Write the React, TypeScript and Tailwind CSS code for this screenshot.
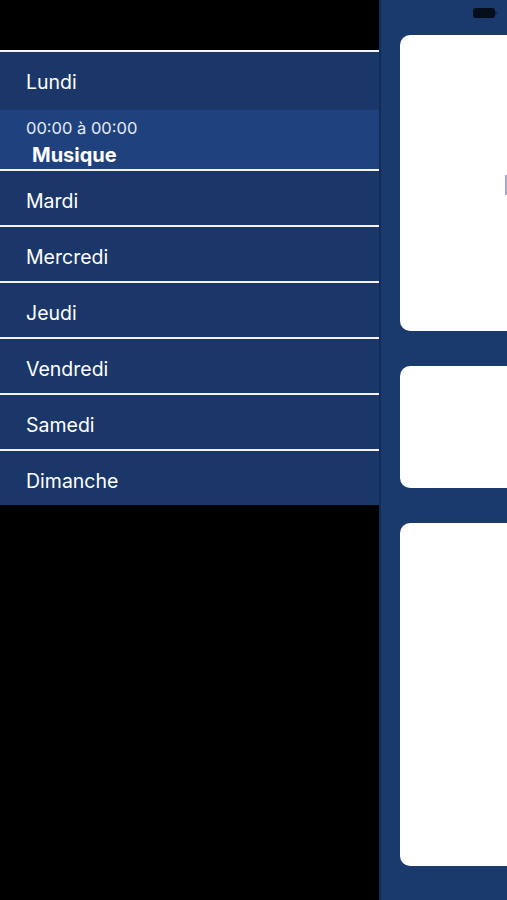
import React from 'react';

const days = ['Mardi', 'Mercredi', 'Jeudi', 'Vendredi', 'Samedi', 'Dimanche'];

const Divider = () => <div className="h-[2px] bg-[#f2f4f8]" />;

export default function App() {
  return (
    <div
      className="flex w-[507px] h-[900px] overflow-hidden bg-black"
      style={{ fontFamily: 'Inter, "Liberation Sans", sans-serif' }}
    >
      {/* Left: week list */}
      <div className="w-[379px] shrink-0 pt-[50px]">
        <Divider />
        <div className="h-[58px] bg-[#1b3769] flex items-center pl-[26px] pt-[4px] text-[19.5px] text-white">
          Lundi
        </div>
        <div className="h-[59px] bg-[#1f427f] pl-[26px] pt-[8px] text-white">
          <div className="text-[16.5px] leading-[20px] text-[#e6ebf4]">00:00 à 00:00</div>
          <div className="mt-[4px] pl-[6px] text-[20px] leading-[26px] font-bold">Musique</div>
        </div>
        {days.map((d) => (
          <div key={d}>
            <Divider />
            <div className="h-[54px] bg-[#1b3769] flex items-center pl-[26px] pt-[8px] text-[19.5px] text-white">
              {d}
            </div>
          </div>
        ))}
      </div>

      {/* Right: detail panel */}
      <div className="relative flex-1 bg-[#1a3a6d] border-l-[2px] border-[#132c55] pt-[35px] pl-[19px] flex flex-col gap-[35px]">
        <div className="absolute top-[8px] right-[10px] flex items-center">
          <div className="w-[22px] h-[10px] rounded-[3px] bg-[#060d1c]" />
          <div className="w-[2px] h-[4px] rounded-r-sm bg-[#0e2347]" />
        </div>
        <div className="relative h-[296px] bg-white rounded-l-[10px]">
          <div className="absolute right-0 top-[140px] w-[2px] h-[20px] bg-[#a9a6cc]" />
        </div>
        <div className="h-[122px] bg-white rounded-l-[10px]" />
        <div className="h-[343px] bg-white rounded-l-[10px]" />
      </div>
    </div>
  );
}
